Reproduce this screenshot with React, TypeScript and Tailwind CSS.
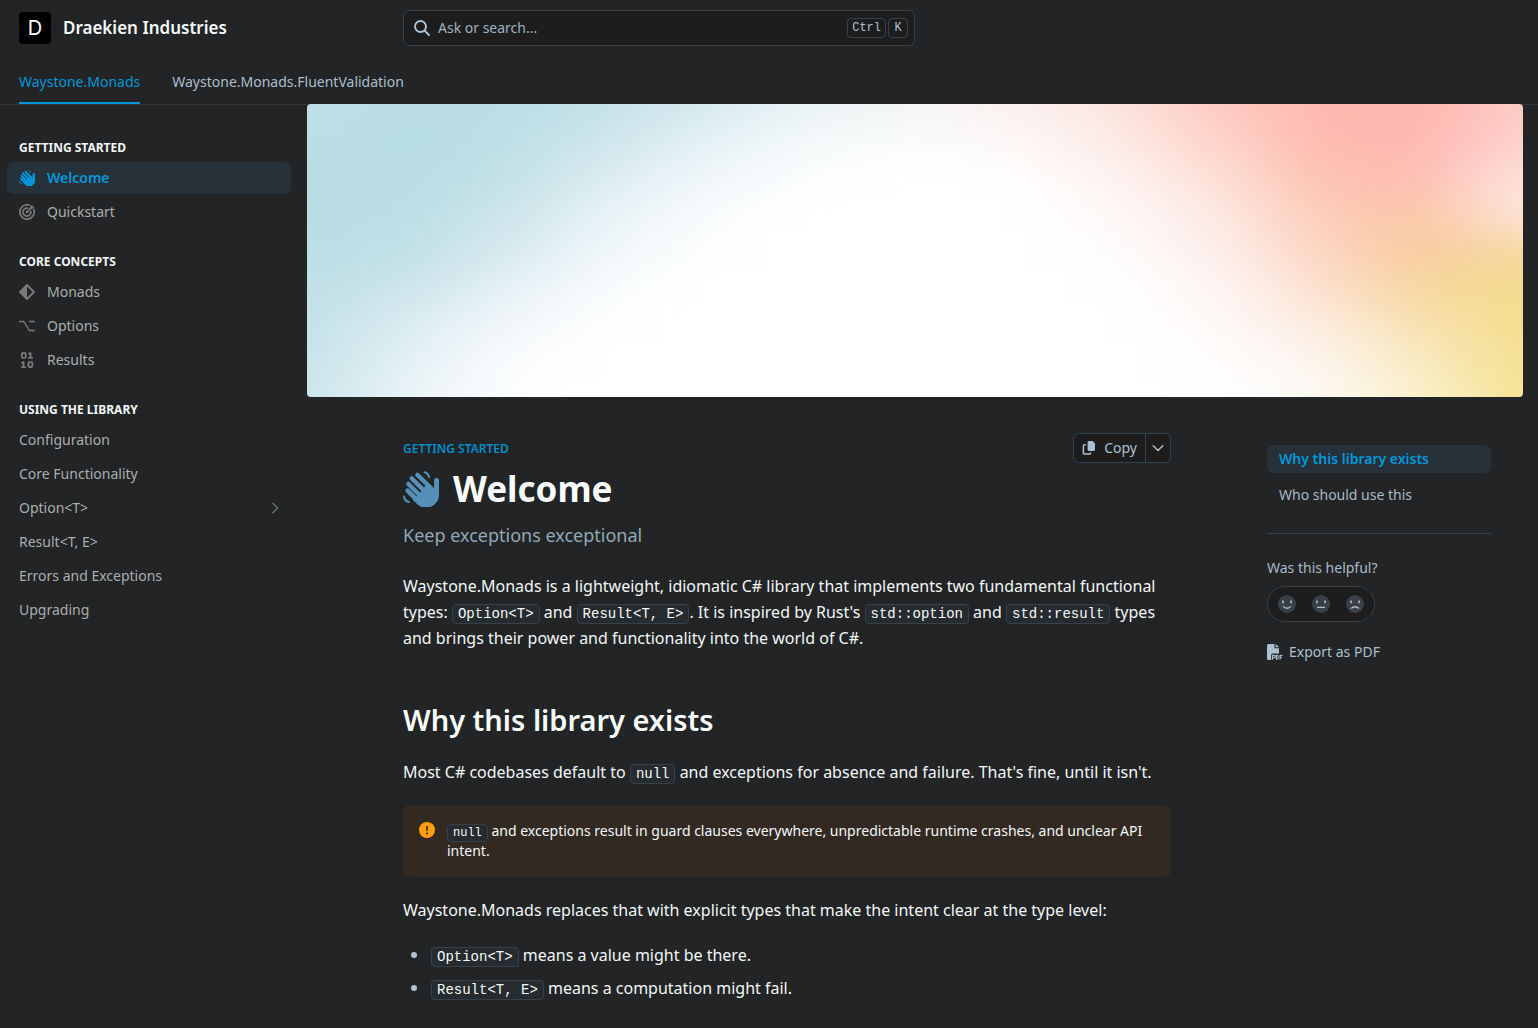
import type { ReactNode } from "react";

type IconProps = { className?: string };

function WaveIcon({ className = "size-4" }: IconProps) {
  return (
    <svg viewBox="0 0 36 36" className={className} fill="none" stroke="currentColor" strokeLinecap="round" aria-hidden="true">
      <path d="M14.5 4 28 17M8.8 7.5 25 23.5M5.4 13 20 27.5M4.6 19.6 16 31" strokeWidth="4.5" />
      <path d="M33.5 9.5v14" strokeWidth="5" />
      <path
        d="M22.5 14.5 28.8 18Q31 18 31 15.5V9.5L36 12V23A13 13 0 0 1 13 32L9.5 28.5 14.5 24.5 18.5 20Z"
        fill="currentColor"
        stroke="none"
      />
      <path d="M21.5 1.2Q25.2 2 26 6" strokeWidth="2" />
      <path d="M1 25.5Q1.6 30 6 31" strokeWidth="2" />
    </svg>
  );
}

function TargetIcon() {
  return (
    <svg viewBox="0 0 16 16" className="size-4" fill="none" stroke="currentColor" strokeWidth="1.7" strokeLinecap="round" aria-hidden="true">
      <path d="M10.4 1.2A7.2 7.2 0 1 0 14.8 5.6" />
      <path d="M8.6 4.1A4 4 0 1 0 11.9 7.4" />
      <path d="M8 8 12 4" />
      <path d="M11 5V2.8L13.2.6 13.6 2.4 15.4 2.8 13.2 5Z" fill="currentColor" stroke="none" />
      <circle cx="8" cy="8" r="1.3" fill="currentColor" stroke="none" />
    </svg>
  );
}

function DiamondIcon() {
  return (
    <svg viewBox="0 0 16 16" className="size-4" aria-hidden="true">
      <path d="M8 1 15 8 8 15 1 8Z" fill="none" stroke="currentColor" strokeWidth="1.8" strokeLinejoin="round" />
      <path d="M8 1V15L1 8Z" fill="currentColor" />
    </svg>
  );
}

function OptionIcon() {
  return (
    <svg viewBox="0 0 16 16" className="size-4" fill="none" stroke="currentColor" strokeWidth="1.4" strokeLinecap="round" strokeLinejoin="round" aria-hidden="true">
      <path d="M.6 3.5H4.8L10.4 12.5H15.4M10.6 3.5H15.4" />
    </svg>
  );
}

function BinaryIcon() {
  return (
    <svg viewBox="0 0 16 16" className="size-4" fill="none" stroke="currentColor" strokeWidth="1.8" strokeLinecap="round" strokeLinejoin="round" aria-hidden="true">
      <rect x="2.8" y="1" width="4" height="4.8" rx="1.4" />
      <path d="M10 1.6 11.5 1V5.9M9.8 5.9H13.2" />
      <rect x="9.4" y="10.2" width="4" height="4.8" rx="1.4" />
      <path d="M3 10.8 4.5 10.2V15.1M2.8 15.1H6.2" />
    </svg>
  );
}

function SearchIcon() {
  return (
    <svg viewBox="0 0 16 16" className="size-4" fill="none" stroke="currentColor" strokeWidth="1.9" strokeLinecap="round" aria-hidden="true">
      <circle cx="6.5" cy="6.5" r="5.5" />
      <path d="M10.6 10.6 15 15" />
    </svg>
  );
}

function CopyIcon() {
  return (
    <svg viewBox="0 0 14 16" className="h-4 w-3.5" aria-hidden="true">
      <path d="M7 1H10.6L13 3.4V9.6A1.4 1.4 0 0 1 11.6 11H7A1.4 1.4 0 0 1 5.6 9.6V2.4A1.4 1.4 0 0 1 7 1Z" fill="currentColor" />
      <path d="M3.8 4.7H2.6A1.2 1.2 0 0 0 1.4 5.9V12.9A1.2 1.2 0 0 0 2.6 14.1H7.4A1.2 1.2 0 0 0 8.6 12.9V12.4" fill="none" stroke="currentColor" strokeWidth="1.5" />
    </svg>
  );
}

function Chevron({ className }: IconProps) {
  return (
    <svg viewBox="0 0 12 12" className={className} fill="none" stroke="currentColor" strokeWidth="1.4" strokeLinecap="round" strokeLinejoin="round" aria-hidden="true">
      <path d="M1.2 3.8 6 8.6 10.8 3.8" />
    </svg>
  );
}

function PdfIcon() {
  return (
    <svg viewBox="0 0 16 16" className="size-4" aria-hidden="true">
      <path d="M1.6 0H7.5V4.2H12V9.6H5.6A1.4 1.4 0 0 0 4.2 11V16H1.6A1.6 1.6 0 0 1 0 14.4V1.6A1.6 1.6 0 0 1 1.6 0ZM8.6 0 12 3.2H8.6Z" fill="currentColor" />
      <path d="M5.6 15.8V11.4H7A1.1 1.1 0 0 1 7 13.8H5.6M9.3 11.4V15.2H10A1.2 1.2 0 0 0 11.2 14V12.6A1.2 1.2 0 0 0 10 11.4ZM13.1 15.8V11.4H15.4M13.1 13.4H14.8" fill="none" stroke="currentColor" strokeWidth="1.1" />
    </svg>
  );
}

function Face({ label, mouth }: { label: string; mouth: string }) {
  return (
    <button type="button" aria-label={label} className="flex size-[34px] items-center justify-center">
      <svg viewBox="0 0 18 18" className="size-[18px]" aria-hidden="true">
        <circle cx="9" cy="9" r="9" fill="#3a4045" />
        <path d="M5 5.4V8.2M13 5.4V8.2" stroke="#adc0cf" strokeWidth="1.6" />
        <path d={mouth} fill="none" stroke="#adc0cf" strokeWidth="1.3" />
      </svg>
    </button>
  );
}

function Code({ children, small }: { children: ReactNode; small?: boolean }) {
  return (
    <code
      className={
        small
          ? "rounded border border-[#33424d] bg-[#252b2e] px-[5px] py-px font-['Liberation_Mono',monospace] text-xs text-[#f5fafc]"
          : "rounded border border-[#33424d] bg-[#252b2e] px-[5px] py-px font-['Liberation_Mono',monospace] text-sm text-[#f5fafc]"
      }
    >
      {children}
    </code>
  );
}

type NavItem = { label: string; icon?: ReactNode; active?: boolean; expandable?: boolean };

const sections: { title: string; items: NavItem[] }[] = [
  {
    title: "GETTING STARTED",
    items: [
      { label: "Welcome", icon: <WaveIcon />, active: true },
      { label: "Quickstart", icon: <TargetIcon /> },
    ],
  },
  {
    title: "CORE CONCEPTS",
    items: [
      { label: "Monads", icon: <DiamondIcon /> },
      { label: "Options", icon: <OptionIcon /> },
      { label: "Results", icon: <BinaryIcon /> },
    ],
  },
  {
    title: "USING THE LIBRARY",
    items: [
      { label: "Configuration" },
      { label: "Core Functionality" },
      { label: "Option<T>", expandable: true },
      { label: "Result<T, E>" },
      { label: "Errors and Exceptions" },
      { label: "Upgrading" },
    ],
  },
];

function Header() {
  return (
    <header className="border-b border-[#34373a] pl-[19px]">
      <div className="flex h-14 items-center">
        <a href="#home" className="flex w-96 items-center gap-3">
          <span className="flex size-8 items-center justify-center rounded bg-black font-[Inter,sans-serif] text-xl text-white">D</span>
          <span className="text-[17px] font-semibold text-[#f5fafc]">Draekien Industries</span>
        </a>
        <label className="flex h-9 w-full max-w-lg items-center gap-2 rounded-md border border-[#33424d] bg-[#1d1d1d] px-2.5 text-[#adc4d6]">
          <SearchIcon />
          <input
            type="search"
            aria-label="Ask or search"
            placeholder="Ask or search..."
            className="min-w-0 flex-1 bg-transparent text-sm outline-none placeholder:text-[#9fb2c1]"
          />
          <span className="-mr-1 flex gap-0.5 font-['Liberation_Mono',monospace] text-xs">
            <kbd className="flex h-5 items-center rounded border border-[#33424d] px-1 font-[inherit]">Ctrl</kbd>
            <kbd className="flex h-5 w-5 items-center justify-center rounded border border-[#33424d] font-[inherit]">K</kbd>
          </span>
        </label>
      </div>
      <nav aria-label="Sections" className="flex h-12 items-end gap-8 text-sm">
        <a href="#monads" className="flex h-11 items-center text-[#0099d8] shadow-[inset_0_-2px_0_#0099d8]">Waystone.Monads</a>
        <a href="#fluent" className="flex h-11 items-center text-[#adbfcd]">Waystone.Monads.FluentValidation</a>
      </nav>
    </header>
  );
}

function Sidebar() {
  return (
    <nav aria-label="Pages" className="flex w-[291px] shrink-0 flex-col gap-[25px] pt-[34px] pl-[7px]">
      {sections.map((section) => (
        <section key={section.title}>
          <h2 className="mb-[5px] px-3 text-xs leading-[18px] font-bold text-[#f0f5f7]">{section.title}</h2>
          <ul className="flex flex-col gap-0.5">
            {section.items.map((item) => (
              <li key={item.label}>
                <a
                  href="#page"
                  className={
                    item.active
                      ? "flex h-8 items-center gap-3 rounded-md bg-[#26313a] px-3 text-sm font-semibold text-[#0099dc]"
                      : "flex h-8 items-center gap-3 rounded-md px-3 text-sm text-[#abaeaf]"
                  }
                >
                  {item.icon && <span className={item.active ? "text-[#0099dc]" : "text-[#77797b]"}>{item.icon}</span>}
                  <span className="flex-1">{item.label}</span>
                  {item.expandable && <Chevron className="-mr-0.5 size-3 -rotate-90 text-[#6c6f70]" />}
                </a>
              </li>
            ))}
          </ul>
        </section>
      ))}
    </nav>
  );
}

// Colour mesh of the cover, row by row; the blur blends neighbouring cells.
const mesh = [
  "bfe0e6 b9dde4 bbdee5 c4e1e7 d8eaf0 eaf3f5 f5f6f6 faf2f0 fbe3dc fdcac2 feb8af feb5ae fdcdc7",
  "bcdee5 b8dde4 bddfe5 cfe6ed e6f2f5 f5fafb fafbfb fdf8f7 fcebe5 fdd3c9 febaaf feb7b1 fed2ce",
  "badde5 b9dde4 c2e1e6 ddecf2 f2f8fa fcfdfe ffffff fefefe fdf3f0 fce0d6 fcc2b0 fdbeb3 fde4df",
  "b9dde4 bbdee5 cde5eb e9f4f7 fafcfd ffffff ffffff ffffff fdf8f7 fce9e3 fcccb9 fbc5a5 fde8de",
  "bbdfe5 bfe0e6 d8e9ef f1f8fa fefefe ffffff ffffff ffffff fdfcfc fcefea fcd4c2 f8cb9f f6d9a2",
  "bedfe5 cce4eb e6f2f6 fafcfd ffffff ffffff ffffff ffffff fefefe fdf6f4 fcdfcf f6d69c f3dc8c",
  "c2e1e7 dbecf2 f2f7f9 fefefe ffffff ffffff ffffff ffffff ffffff fdf9f8 fcebdf f8e0b0 f4de8c",
  "c6e3e9 e4f1f5 fbfcfd ffffff ffffff ffffff ffffff ffffff ffffff fefdfd fcf4ee f9e9c0 f4e090",
  "cae5eb ebf4f7 fdfefe ffffff ffffff ffffff ffffff ffffff ffffff fefefe fcfaf5 faf0cb f5e393",
].map((row) => row.split(" "));

const clamp = (value: number, max: number) => Math.min(Math.max(value, 0), max);
const meshRows = Array.from({ length: 15 }, (_, i) => i - 3);
const meshCols = Array.from({ length: 17 }, (_, i) => i - 2);

function Cover() {
  return (
    <svg viewBox="0 0 1216 293" preserveAspectRatio="none" className="-mt-px block aspect-[1216/293] w-full rounded" aria-hidden="true">
      <defs>
        <filter id="blend" filterUnits="userSpaceOnUse" x="-200" y="-110" width="1616" height="513" colorInterpolationFilters="sRGB">
          <feGaussianBlur stdDeviation="44 17" />
        </filter>
      </defs>
      <g filter="url(#blend)" shapeRendering="crispEdges">
        {meshRows.map((r) =>
          meshCols.map((c) => (
            <rect
              key={`${r}:${c}`}
              x={Math.round((c - 0.5) * 101.3)}
              y={Math.round((r - 0.5) * 36.6)}
              width="103"
              height="38"
              fill={`#${mesh[clamp(r, 8)][clamp(c, 12)]}`}
            />
          )),
        )}
      </g>
    </svg>
  );
}

function Article() {
  return (
    <article className="min-w-0 flex-1 pb-4 text-base leading-[26px] text-[#f2f7f8]">
      <div className="flex items-start justify-between">
        <div>
          <p className="mt-[7px] text-xs leading-[18px] font-semibold text-[#0090cc]">GETTING STARTED</p>
          <h1 className="mt-2 flex items-center gap-3.5 text-[35px] leading-[46px] font-bold text-[#f8fcfd]">
            <WaveIcon className="size-9 text-[#5490b9]" />
            Welcome
          </h1>
        </div>
        <div className="flex h-[30px] items-stretch rounded-md border border-[#33424d] bg-[#1d1d1d] text-sm text-[#adc0cf]">
          <button type="button" className="flex items-center gap-2 px-2">
            <CopyIcon />
            Copy
          </button>
          <button type="button" aria-label="More actions" className="flex w-[25px] items-center justify-center border-l border-[#33424d]">
            <Chevron className="size-3" />
          </button>
        </div>
      </div>
      <p className="mt-[9px] text-lg leading-7 text-[#93a8b8]">Keep exceptions exceptional</p>
      <p className="mt-6">
        Waystone.Monads is a lightweight, idiomatic C# library that implements two fundamental functional types:{" "}
        <Code>Option&lt;T&gt;</Code> and <Code>Result&lt;T, E&gt;</Code>. It is inspired by Rust's <Code>std::option</Code> and{" "}
        <Code>std::result</Code> types and brings their power and functionality into the world of C#.
      </p>
      <h2 id="why" className="mt-[49px] text-[29px] leading-10 font-semibold text-[#f8fcfd]">Why this library exists</h2>
      <p className="mt-[19px]">
        Most C# codebases default to <Code>null</Code> and exceptions for absence and failure. That's fine, until it isn't.
      </p>
      <div className="mt-5 flex gap-3 rounded-md bg-[#322923] p-4 text-sm leading-5">
        <svg viewBox="0 0 16 16" className="mt-px size-4 shrink-0" aria-hidden="true">
          <circle cx="8" cy="8" r="8" fill="#ff9f0a" />
          <path d="M8 4.4V8.6" stroke="#322923" strokeWidth="1.5" strokeLinecap="round" />
          <circle cx="8" cy="11.4" r="1" fill="#322923" />
        </svg>
        <p>
          <Code small>null</Code> and exceptions result in guard clauses everywhere, unpredictable runtime crashes, and unclear API intent.
        </p>
      </div>
      <p className="mt-5">Waystone.Monads replaces that with explicit types that make the intent clear at the type level:</p>
      <ul className="mt-[19px] flex flex-col gap-[7px] pl-2">
        <li className="flex items-center gap-3.5">
          <span className="size-1.5 rounded-full bg-[#adc4d6]" />
          <span><Code>Option&lt;T&gt;</Code> means a value might be there.</span>
        </li>
        <li className="flex items-center gap-3.5">
          <span className="size-1.5 rounded-full bg-[#adc4d6]" />
          <span><Code>Result&lt;T, E&gt;</Code> means a computation might fail.</span>
        </li>
      </ul>
    </article>
  );
}

function Outline() {
  return (
    <aside className="w-56 shrink-0 pt-3 text-sm text-[#a9bac7]">
      <nav aria-label="On this page" className="flex flex-col gap-2 border-b border-[#33424d] pb-6">
        <a href="#why" className="flex h-7 items-center rounded-md bg-[#26313a] px-3 font-semibold text-[#0099d8]">Why this library exists</a>
        <a href="#who" className="flex h-7 items-center px-3">Who should use this</a>
      </nav>
      <p className="mt-6 leading-5">Was this helpful?</p>
      <div className="mt-2 flex h-9 w-[108px] items-center justify-center rounded-full border border-[#33424d] bg-[#1d1d1d]">
        <Face label="Yes" mouth="M5 11.4Q9 15.2 13 11.4" />
        <Face label="Not sure" mouth="M5 12.4H13" />
        <Face label="No" mouth="M5 13.6Q9 10 13 13.6" />
      </div>
      <a href="#export" className="mt-5 flex items-center gap-1.5 leading-5 text-[#adc0cf]">
        <PdfIcon />
        Export as PDF
      </a>
    </aside>
  );
}

export default function App() {
  return (
    <div className="min-h-screen bg-[#222425] font-['Noto_Sans',sans-serif]">
      <Header />
      <div className="flex gap-4">
        <Sidebar />
        <main className="min-w-0 flex-1 pr-[15px]">
          <Cover />
          <div className="flex gap-24 pt-9 pr-8 pl-24">
            <Article />
            <Outline />
          </div>
        </main>
      </div>
    </div>
  );
}
